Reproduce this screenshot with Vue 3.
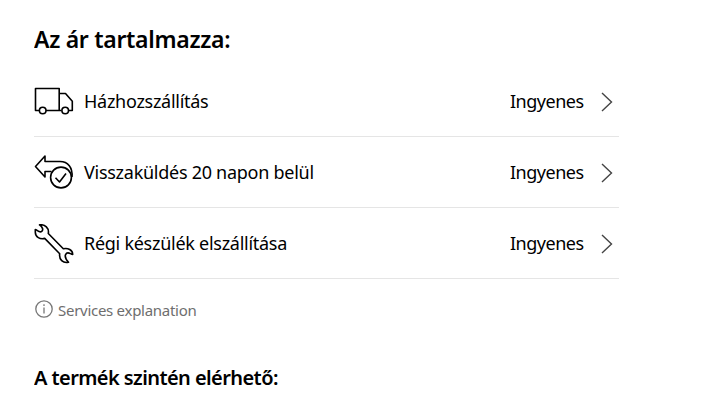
<template>
  <main class="page">
    <h2 class="title">Az ár tartalmazza:</h2>

    <ul class="service-list">
      <li v-for="item in services" :key="item.id" class="service-item">
        <svg class="service-icon" viewBox="0 0 40 40">
          <g v-if="item.id === 'delivery'">
            <path d="M5 28.5H1.5V6.5H25.2V28.5H11M25.2 11.5H31.5L38.3 19.3V28.5H34M25.2 28.5H27.5" />
            <circle cx="8.7" cy="28.5" r="3.3" />
            <circle cx="31.2" cy="28.5" r="3.3" />
          </g>
          <g v-else-if="item.id === 'return'">
            <path d="M17.5 18.5H11V24L1.5 13.5L11 3V8.5H26C34 8.5 38.8 14.5 38 24" />
            <circle cx="27" cy="24.5" r="10.4" />
            <path d="M21.5 24.8L25.5 29L32 20.5" />
          </g>
          <g v-else>
            <path :d="wrench" />
          </g>
        </svg>
        <span class="service-name">{{ item.name }}</span>
        <span class="service-price">{{ item.price }}</span>
        <svg class="chevron" viewBox="0 0 12 20">
          <path d="M1 1L10.5 10L1 19" />
        </svg>
      </li>
    </ul>

    <div class="explanation">
      <svg class="info-icon" viewBox="0 0 18 18">
        <circle cx="9" cy="9" r="8.2" />
        <path d="M9 7.5V13.5M9 4.3V6" />
      </svg>
      <span class="explanation-text">Services explanation</span>
    </div>

    <h3 class="subtitle">A termék szintén elérhető:</h3>
  </main>
</template>

<script setup>
const services = [
  { id: 'delivery', name: 'Házhozszállítás', price: 'Ingyenes' },
  { id: 'return', name: 'Visszaküldés 20 napon belül', price: 'Ingyenes' },
  { id: 'removal', name: 'Régi készülék elszállítása', price: 'Ingyenes' }
]

const wrench = 'M5.5 0.9C11 0 15.3 4 14.3 9.5L29.3 24.8C34 23.7 38.6 26 38.7 30.5C36.5 30.3 35 27.8 32.5 29.3C30 31.5 31.5 34.8 34.5 38.3C29 39.5 24.8 35.5 25.7 29.7L10.7 14.4C6 15.5 1.4 13.2 1.3 8.2V5.5C3 5.5 5 9 7.5 7.6C9.8 5.8 8.5 3 5.5 0.9Z'
</script>

<style>
body { background: #fff; }
</style>

<style scoped>
.page { width: 585px; height: 402px; margin-left: 34px; padding-top: 22px; box-sizing: border-box; overflow: hidden; color: #000; font-family: "Noto Sans", "Open Sans", sans-serif; }
.title { margin: 0; height: 44px; line-height: 34px; font-size: 23px; font-weight: 600; letter-spacing: -0.3px; white-space: nowrap; }

.service-list { list-style: none; margin: 0; padding: 0; }
.service-item { display: flex; align-items: center; height: 71px; padding-top: 1px; box-sizing: border-box; border-bottom: 1px solid #e5e5e5; font-size: 18px; }
.service-icon { width: 40px; height: 40px; flex: none; fill: none; stroke: #000; stroke-width: 1.6; stroke-linejoin: round; }
.service-icon circle { fill: #fff; }
.service-name { margin-left: 10px; padding-bottom: 2px; flex: 1; white-space: nowrap; letter-spacing: -0.27px; }
.service-price { width: 91px; padding-bottom: 2px; letter-spacing: -0.5px; }
.chevron { width: 12px; height: 20px; margin-right: 6px; fill: none; stroke: #444; stroke-width: 1.4; }

.explanation { display: flex; align-items: center; height: 62px; color: #6e6e6e; }
.info-icon { width: 18px; height: 18px; margin: -2px 5px 0 1px; fill: none; stroke: #777; stroke-width: 1.3; }
.explanation-text { font-size: 15px; letter-spacing: -0.28px; }
.subtitle { margin: 20px 0 0; line-height: 34px; font-size: 20px; font-weight: 600; letter-spacing: -0.58px; white-space: nowrap; }
</style>
